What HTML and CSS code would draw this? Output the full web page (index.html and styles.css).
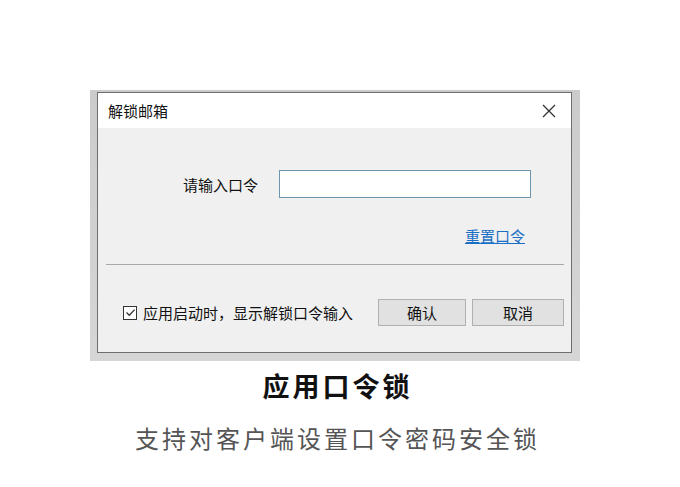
FILE: index.html
```html
<!DOCTYPE html>
<html lang="zh">
<head>
<meta charset="utf-8">
<link rel="stylesheet" href="styles.css">
</head>
<body>
<div class="page">
  <div class="shot">
    <div class="dialog">
      <div class="titlebar">
        <span class="title">解锁邮箱</span>
        <svg class="close" width="14" height="14" viewBox="0 0 14 14"><path d="M1 1L13 13M13 1L1 13" stroke="#333" stroke-width="1.3" fill="none"/></svg>
      </div>
      <div class="body">
        <div class="row">
          <label class="label">请输入口令</label>
          <div class="input"></div>
        </div>
        <div class="linkrow"><a class="link">重置口令</a></div>
        <div class="sep"></div>
        <div class="footer">
          <div class="check">
            <span class="box"><svg width="11" height="11" viewBox="0 0 11 11"><path d="M1.5 5.5L4.3 8.3L9.6 2.6" stroke="#333" stroke-width="1.3" fill="none"/></svg></span>
            <span>应用启动时，显示解锁口令输入</span>
          </div>
          <div class="btns">
            <button class="btn">确认</button>
            <button class="btn">取消</button>
          </div>
        </div>
      </div>
    </div>
  </div>
  <div class="caption">应用口令锁</div>
  <div class="sub">支持对客户端设置口令密码安全锁</div>
</div>
</body>
</html>
```

FILE: styles.css
```css
html, body {
  margin: 0;
  padding: 0;
  background: #fff;
}
.page {
  width: 680px;
  height: 487px;
  padding-top: 90px;
  box-sizing: border-box;
  font-family: "Noto Sans CJK SC", "Noto Sans", sans-serif;
}
.shot {
  margin-left: 90px;
  width: 490px;
  height: 271px;
  box-sizing: border-box;
  padding: 2px 8px 8px 7px;
  background: linear-gradient(#cbcbcb, #d6d6d6);
}
.dialog {
  width: 475px;
  height: 261px;
  box-sizing: border-box;
  border: 1px solid #6e6e6e;
  background: #f0f0f0;
  display: flex;
  flex-direction: column;
}
.titlebar {
  height: 35px;
  background: #fff;
  display: flex;
  align-items: center;
  justify-content: space-between;
  padding: 0 15px 0 10px;
  flex-shrink: 0;
}
.title {
  font-size: 15px;
  color: #111;
  line-height: 1;
}
.close { display: block; }
.body {
  flex: 1;
  padding-top: 42px;
}
.row {
  display: flex;
  align-items: center;
}
.label {
  width: 160px;
  text-align: right;
  font-size: 15px;
  color: #111;
  margin-right: 21px;
}
.input {
  width: 252px;
  height: 28px;
  box-sizing: border-box;
  border: 1px solid #6d95ad;
  background: #fff;
}
.linkrow {
  display: flex;
  justify-content: flex-end;
  padding-right: 46px;
  margin-top: 27px;
  height: 20px;
  align-items: center;
}
.link {
  font-size: 15px;
  color: #1a6fc4;
  text-decoration: underline;
  line-height: 1;
}
.sep {
  margin: 19px 7px 0 8px;
  height: 1px;
  background: #a8a8a8;
}
.footer {
  display: flex;
  align-items: center;
  justify-content: space-between;
  padding: 0 7px 0 25px;
  margin-top: 34px;
}
.check {
  display: flex;
  align-items: center;
  font-size: 15px;
  color: #111;
}
.box {
  width: 14px;
  height: 14px;
  box-sizing: border-box;
  border: 1px solid #333;
  background: #fff;
  margin-right: 6px;
  display: flex;
  align-items: center;
  justify-content: center;
}
.box svg { display: block; }
.btns {
  display: flex;
  gap: 6px;
}
.btn {
  width: 88px;
  height: 27px;
  box-sizing: border-box;
  border: 1px solid #b0b0b0;
  background: #e1e1e1;
  font-family: "Noto Sans CJK SC", sans-serif;
  font-size: 15px;
  color: #111;
  padding: 0;
  line-height: 1;
}
.btn + .btn { width: 92px; }
.caption {
  text-align: center;
  font-size: 27px;
  font-weight: bold;
  color: #111;
  letter-spacing: 3px;
  line-height: 1;
  margin-top: 11px;
  padding-right: 5px;
}
.sub {
  text-align: center;
  font-size: 24px;
  color: #555;
  letter-spacing: 3px;
  line-height: 1;
  margin-top: 27px;
  padding-right: 5px;
}
```
